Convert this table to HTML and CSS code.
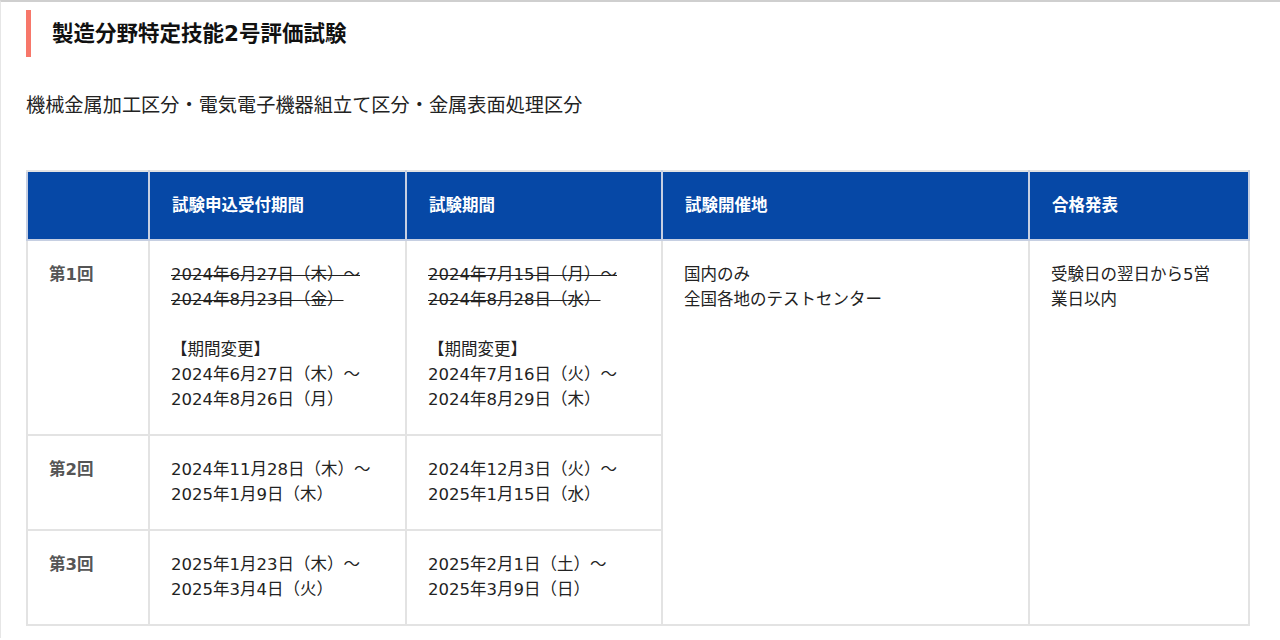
FILE: index.html
```html
<!DOCTYPE html>
<html lang="ja">
<head>
<meta charset="utf-8">
<link rel="stylesheet" href="styles.css">
</head>
<body>
<div class="page">
  <h2 class="title">製造分野特定技能2号評価試験</h2>
  <p class="lead">機械金属加工区分・電気電子機器組立て区分・金属表面処理区分</p>
  <table class="schedule">
    <colgroup>
      <col class="c1"><col class="c2"><col class="c3"><col class="c4"><col class="c5">
    </colgroup>
    <thead>
      <tr>
        <th></th>
        <th>試験申込受付期間</th>
        <th>試験期間</th>
        <th>試験開催地</th>
        <th>合格発表</th>
      </tr>
    </thead>
    <tbody>
      <tr>
        <td class="round">第1回</td>
        <td><s>2024年6月27日（木）～<br>2024年8月23日（金）</s><br><br>【期間変更】<br>2024年6月27日（木）～<br>2024年8月26日（月）</td>
        <td><s>2024年7月15日（月）～<br>2024年8月28日（水）</s><br><br>【期間変更】<br>2024年7月16日（火）～<br>2024年8月29日（木）</td>
        <td rowspan="3">国内のみ<br>全国各地のテストセンター</td>
        <td rowspan="3">受験日の翌日から5営業日以内</td>
      </tr>
      <tr>
        <td class="round">第2回</td>
        <td>2024年11月28日（木）～<br>2025年1月9日（木）</td>
        <td>2024年12月3日（火）～<br>2025年1月15日（水）</td>
      </tr>
      <tr>
        <td class="round">第3回</td>
        <td>2025年1月23日（木）～<br>2025年3月4日（火）</td>
        <td>2025年2月1日（土）～<br>2025年3月9日（日）</td>
      </tr>
    </tbody>
  </table>
</div>
</body>
</html>
```
FILE: styles.css
```css
html, body {
  margin: 0;
  padding: 0;
  background: #fff;
}
body {
  font-family: "DejaVu Sans", "Noto Sans CJK JP", sans-serif;
  color: #222;
  border-top: 2px solid #cfcfcf;
  border-left: 1px solid #e6e6e6;
  min-height: 638px;
  box-sizing: border-box;
}
.page {
  padding: 8px 30px 0 25px;
}
.title {
  margin: 0;
  border-left: 5px solid #f7776a;
  padding: 0 0 0 21px;
  height: 47px;
  line-height: 47px;
  font-size: 21.5px;
  font-weight: 700;
  color: #111;
}
.lead {
  margin: 34px 0 0;
  font-size: 19.2px;
  line-height: 30px;
  color: #222;
}
.schedule {
  margin-top: 49px;
  width: 1222px;
  border-collapse: collapse;
  table-layout: fixed;
  border: 2px solid #e3e3e3;
  font-size: 16.5px;
  line-height: 25px;
}
.c1 { width: 122px; }
.c2 { width: 257px; }
.c3 { width: 256px; }
.c4 { width: 367px; }
.c5 { width: 220px; }
.schedule th {
  background: #0648a6;
  color: #fff;
  font-weight: 700;
  text-align: left;
  height: 69px;
  padding: 0 22px;
  box-sizing: border-box;
  border: 2px solid #c6cfe2;
  border-top-color: #e3e3e3;
  border-bottom: 2px solid #c6cfe2;
}
.schedule td {
  vertical-align: top;
  padding: 21px 23px 22px 21px;
  border: 2px solid #e3e3e3;
  color: #222;
}
.schedule td.round {
  font-weight: 700;
  color: #555;
}
.schedule s {
  text-decoration-thickness: 1px;
}
```
